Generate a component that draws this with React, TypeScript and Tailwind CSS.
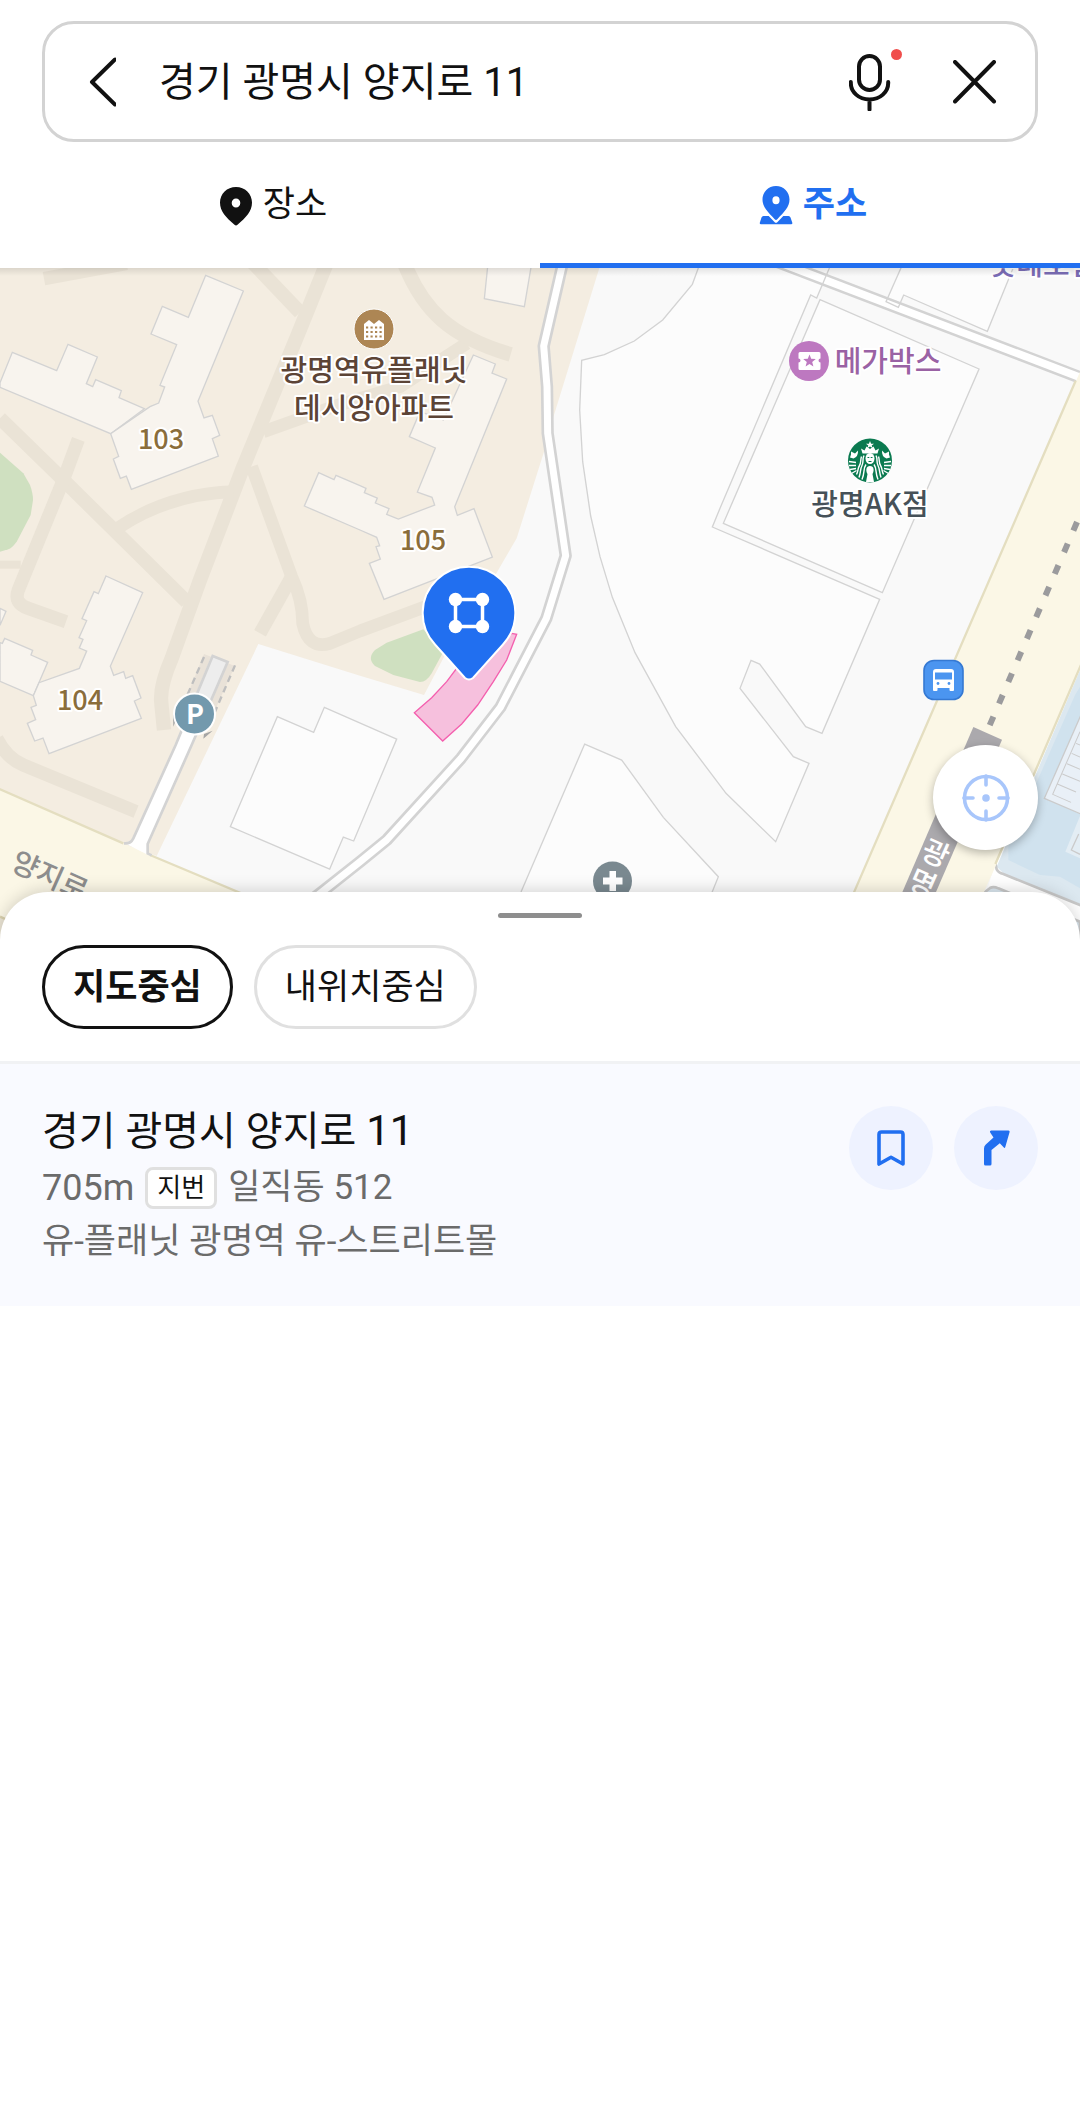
import { useState } from "react";
import clsx from "clsx";

const FILTERS = ["지도중심", "내위치중심"];

const RESULTS = [
  {
    title: "경기 광명시 양지로",
    no: "11",
    distance: "705m",
    lot: "일직동",
    lotNo: "512",
    building: "유-플래닛 광명역 유-스트리트몰",
  },
];

export default function App() {
  const [tab, setTab] = useState("address");
  const [filter, setFilter] = useState(FILTERS[0]);

  return (
    <div className="min-h-screen flex flex-col bg-white text-[#111111] font-[Roboto,'Noto_Sans_CJK_KR',sans-serif]">
      <header className="bg-white">
        <SearchBar />
        <nav className="grid grid-cols-2">
          <TabButton label="장소" active={tab === "place"} onClick={() => setTab("place")}>
            <PlaceIcon />
          </TabButton>
          <TabButton label="주소" active={tab === "address"} onClick={() => setTab("address")}>
            <AddressIcon />
          </TabButton>
        </nav>
      </header>

      {/* Map */}
      <section className="relative h-[672px] overflow-hidden bg-[#f9f9f9]">
        <MapView />
        <div className="absolute inset-x-0 top-0 h-2 bg-linear-to-b from-black/10 to-transparent" />
        <button
          aria-label="현재 위치"
          className="absolute right-[42px] bottom-[90px] w-[105px] h-[105px] rounded-full bg-white shadow-[0_3px_10px_rgba(0,0,0,0.28)] flex items-center justify-center"
        >
          <svg width="48" height="48" viewBox="0 0 48 48" fill="none" stroke="#a8c6fb" strokeWidth="3.600">
            <circle cx="24" cy="24" r="21.500" />
            <path d="M24 2v9M24 46v-9M2 24h9M46 24h-9" strokeLinecap="round" />
            <circle cx="24" cy="24" r="3.800" fill="#a8c6fb" stroke="none" />
          </svg>
        </button>
      </section>

      {/* Bottom sheet */}
      <main className="relative -mt-12 flex-1 rounded-t-[48px] bg-white shadow-[0_-2px_16px_rgba(0,0,0,0.16)]">
        <div className="pt-[21px] flex justify-center">
          <span className="w-[84px] h-[5px] rounded-full bg-[#8e8e8e]" />
        </div>

        <div className="mt-[27px] px-[42px] pb-8 flex gap-[21px] border-b-3 border-[#f1f2f4]">
          {FILTERS.map((name) => (
            <button
              key={name}
              onClick={() => setFilter(name)}
              className={clsx(
                "h-[84px] px-7 rounded-full border-3 text-[35px] leading-none",
                filter === name ? "border-[#111111] font-bold" : "border-[#e0e0e0]"
              )}
            >
              {name}
            </button>
          ))}
        </div>

        {RESULTS.map((item) => (
          <article key={item.no} className="px-[42px] pb-[37px] flex items-start bg-[#f9faff]">
            <div className="flex-1 pt-[38px] text-[35px] text-[#6b6b6b]">
              <h2 className="text-[40px] leading-[58px] text-[#111111]">
                {item.title} <span className="text-[42px]">{item.no}</span>
              </h2>
              <div className="h-[54px] flex items-center">
                <span className="text-[36px]">{item.distance}</span>
                <span className="mx-[11px] h-[42px] px-[9px] flex items-center rounded-lg border-3 border-[#e0e0e0] bg-white text-[26px] text-[#111111]">
                  지번
                </span>
                <span>
                  {item.lot} {item.lotNo}
                </span>
              </div>
              <p className="leading-[54px]">{item.building}</p>
            </div>
            <div className="pt-[42px] flex gap-[21px]">
              <button aria-label="저장" className="w-[84px] h-[84px] rounded-full bg-[#eef2ff] flex items-center justify-center">
                <svg width="28" height="36" viewBox="0 0 28 36" fill="none" stroke="#216ff0" strokeWidth="3.600" strokeLinejoin="round">
                  <path d="M2 4.500Q2 2 4.500 2h19Q26 2 26 4.500V34l-12-6.800L2 34Z" />
                </svg>
              </button>
              <button aria-label="길찾기" className="w-[84px] h-[84px] rounded-full bg-[#eef2ff] flex items-center justify-center">
                <svg width="28" height="36" viewBox="0 0 28 36" fill="#216ff0">
                  <path d="M9 .5H26.500Q28 .5 27.600 2L23.300 17Q22.700 18.600 21.600 17.300L17.800 13.200L9.500 20V34Q9.500 35.500 8 35.500H3.500Q2 35.500 2 34V18.500Q2 16.300 3.800 14.600L11.500 7.500L8.200 2.500Q7.300 .8 9 .5Z" />
                </svg>
              </button>
            </div>
          </article>
        ))}
      </main>
    </div>
  );
}

function SearchBar() {
  const [query, setQuery] = useState("경기 광명시 양지로 11");

  return (
    <div className="px-[42px] pt-[21px]">
      <div className="h-[121px] pr-2 flex items-stretch rounded-[32px] border-3 border-[#d3d3d3]">
        <button aria-label="뒤로" className="w-[114px] flex items-center justify-center">
          <svg width="28" height="50" viewBox="0 0 28 50" fill="none" stroke="#111" strokeWidth="4" strokeLinecap="round" strokeLinejoin="round">
            <path d="M27 2.500L4 25l23 22.500" />
          </svg>
        </button>
        <input
          aria-label="검색어"
          value={query}
          onChange={(e) => setQuery(e.target.value)}
          className="flex-1 min-w-0 pt-[2px] bg-transparent text-[40px] outline-none"
        />
        <button aria-label="음성 검색" className="w-[105px] relative flex items-center justify-center">
          <svg width="42" height="58" viewBox="0 0 42 58" fill="none" stroke="#111" strokeWidth="4" strokeLinecap="round">
            <rect x="10" y="3" width="21" height="34" rx="10.500" />
            <path d="M1.800 29v1C1.800 39 9.800 46.500 20.500 46.500s18.700-7.500 18.700-16.500v-1M20.500 46.500v10" />
          </svg>
          <span className="absolute left-[74px] top-[25px] w-[11px] h-[11px] rounded-full bg-[#f04e4c]" />
        </button>
        <button aria-label="지우기" className="w-[105px] flex items-center justify-center">
          <svg width="44" height="44" viewBox="0 0 44 44" fill="none" stroke="#111" strokeWidth="4" strokeLinecap="round">
            <path d="M2 2l39 39.500M41 2l-39 39.500" />
          </svg>
        </button>
      </div>
    </div>
  );
}

type TabProps = {
  label: string;
  active: boolean;
  onClick: () => void;
  children: React.ReactNode;
};

function TabButton({ label, active, onClick, children }: TabProps) {
  return (
    <button
      onClick={onClick}
      className={clsx(
        "h-[126px] pt-[6px] pl-[6px] flex items-center justify-center gap-[10px] border-b-5 text-[35px]",
        active ? "border-[#216ff0] text-[#216ff0] font-bold" : "border-transparent"
      )}
    >
      {children}
      {label}
    </button>
  );
}

function PlaceIcon() {
  return (
    <svg width="34" height="40" viewBox="0 0 34 40" fill="currentColor" fillRule="evenodd">
      <path d="M17 1C8 1 1 7.800 1 16.600 1 25.500 7 31.500 15.500 38.800q1.500 1.300 3 0C27 31.500 33 25.500 33 16.600 33 7.800 26 1 17 1Zm0 11.500a4.300 4.500 0 1 1 0 9 4.300 4.500 0 1 1 0-9Z" />
    </svg>
  );
}

function AddressIcon() {
  return (
    <svg width="34" height="40" viewBox="0 0 34 40" fill="currentColor" fillRule="evenodd">
      <path d="M17 0C9.300 0 3.500 6 3.500 13.500c0 7.500 5.500 12.500 12.200 19.700q1.300 1.400 2.600 0C25 26 30.500 21 30.500 13.500 30.500 6 24.700 0 17 0Zm0 10.200a3.600 4 0 1 1 0 8 3.600 4 0 1 1 0-8Z" />
      <path d="M4.500 30h5.200l6 6.200q1.300 1.200 2.600 0l6-6.200h5.200q1.500 0 2 1.500l1.800 5.200q.4 1.600-1.200 1.600H2q-1.600 0-1.200-1.600l1.700-5.200q.5-1.500 2-1.500Z" />
    </svg>
  );
}

/* ---------- Map ---------- */

const PATHS = [
  { d: "M132 836L380 790", w: 40 },
  { d: "M755 785L900 937", w: 42 },
  { d: "M982 785L895 1000L730 1400L600 1740L515 1975Q478 2060 484 2110L492 2190", w: 43 },
  { d: "M0 1255L190 1440L560 1805", w: 42 },
  { d: "M235 1318L190 1440L55 1770Q40 1810 85 1825L198 1865", w: 40 },
  { d: "M355 1583C450 1520 560 1480 700 1475", w: 38 },
  { d: "M755 1400L875 1730Q908 1800 908 1870Q925 1950 990 1930L1080 1893L1290 1815", w: 38 },
  { d: "M875 1730L780 1900", w: 40 },
  { d: "M790 1295L1000 1220L1200 1160L1400 1030", w: 38 },
  { d: "M1215 795C1270 930 1350 1010 1532 1063", w: 44 },
  { d: "M0 1694H62", w: 24 },
  { d: "M-10 2215Q20 2275 70 2295L408 2435", w: 40 },
];

const OUTLINE = "M2100 790L2077 853 1988 960 1903 1023 1813 1064 1745 1081 1739 1230 1748 1385 1772 1548 1800 1670 1837 1792 1905 1958 2027 2180 2160 2356 2178 2380 2327 2525 2427 2290 2380 2270 2220 2065 2253 1981 2279 1992 2417 2180 2466 2200 2639 1798 2137 1581 2160 1525 2432 885 2450 894 2494 790Z";

const WINDING = "M1688 790L1631 1038 1641 1160 1643 1300 1697 1667 1639 1855 1501 2122 1383 2275 1160 2520 1080 2585 940 2696";

// Ground, roads and buildings, drawn on a grid three times finer than the page
function Terrain() {
  return (
    <g transform="scale(0.33334)">
      <rect y="780" width="3240" height="2100" fill="#f9f9f9" />
      <path d="M0 780H1805L1798 804 1662 1245 1632 1355 1550 1615 1490 1718 1330 1975 1272 2085 1080 2027 775 1932 470 2568 0 2400Z" fill="#f4ede1" />
      <g fill="none" stroke="#eae3d6" strokeLinejoin="round">
        {PATHS.map((p) => (
          <path key={p.d} d={p.d} strokeWidth={p.w} />
        ))}
      </g>

      <g fill="#cfe0c0">
        <path d="M0 1358L70 1420 90 1455Q99 1480 99 1500L92 1545 50 1625Q35 1645 25 1648L0 1655Z" />
        <path d="M1270 1888L1160 1928 1125 1950Q1100 1975 1125 1998L1180 2025 1260 2046Q1280 2046 1295 2020L1330 1955Z" />
      </g>

      {/* Right block */}
      <path d={OUTLINE} fill="#fcfcfc" />
      <path d="M2703 804L2658 905 2695 922 2711 885 2962 994 3045 790H2709Z" fill="#fcfcfc" />
      <path d="M2235 748L3260 1140" stroke="#d3d3d3" strokeWidth="38" />
      <path d="M2235 748L3260 1140" stroke="#fff" strokeWidth="23" />
      <g fill="none" stroke="#d3d3d3" strokeWidth="4">
        <path d={OUTLINE} />
        <path d="M2460 899L2937 1107 2647 1778 2170 1570Z" fill="#fcfcfc" />
        <path d="M2709 790L2658 905 2695 922 2711 885 2962 994 3045 790" />
        <path d="M1563 2676L1754 2232 1865 2280 1990 2452 2155 2630 2135 2680" fill="#fcfcfc" />
      </g>

      {/* Apartment buildings */}
      <g fill="#f8f4ee" stroke="#d3d3d3" strokeWidth="4">
        <g transform="translate(0 780)">
          <path d="M0 368L37 277 170 332 204 253 292 291 259 371 278 380 287 359 364 392 357 413 433 446 332 521 0 382Z" />
          <path d="M617 46L730 93 594 424 612 474 637 466 659 526 637 536 655 588 394 688 379 648 361 655 340 597 356 589 332 521 450 440 476 429 494 381 480 376 530 254 453 222 487 139 565 172Z" />
        </g>
        <g transform="translate(1080 780)">
          <path d="M340 285L406 312 396 339 440 357 284 740 292 766 342 746 397 891 72 1018 28 910 61 897 48 860 59 857 50 832 0 810 -167 738 -124 638 -78 659 -72 646 0 677 18 685 13 698 52 714 46 729 87 746 80 763 115 777 224 735 216 712 172 696 226 564 148 530 180 455 250 480Z" />
          <path d="M384 10L373 116 493 140 515 10Z" />
        </g>
        <g transform="translate(0 1740)">
          <path d="M0 188L7 190 14 175 98 211 93 225 143 247 100 347 0 304Z" />
          <path d="M0 85L18 94 0 136Z" />
          <path d="M318 -12L428 38 331 259 341 286 371 275 377 295 398 287 423 354 403 363 424 415 147 521 129 474 104 483 82 430 107 419 93 382 109 376 100 347 117 308 238 265 260 213 238 204 249 178 237 173 260 122 246 116 282 35 295 41Z" />
          <path d="M832 410L941 457 973 382 1190 477 1061 783 1030 771 989 867 691 740Z" fill="#fcfcfc" />
        </g>
      </g>

      {/* Left avenue and the lane that leads to it */}
      <path d="M0 2367L370 2530 450 2565 715 2676 900 2754V2880H0Z" fill="#fbf7e6" />
      <path d="M-6 2365L370 2530M450 2565L900 2754" stroke="#e4dec0" strokeWidth="7" />
      <path d="M0 2750L80 2786V2880H0Z" fill="#ebe5d5" />
      <path d="M0 2750L80 2786" stroke="#d9d0ae" strokeWidth="7" />
      <path d="M612 1962L705 1998 645 2130 560 2090Z" fill="#e9e2d8" />
      <path d="M635 1967L685 1986 575 2235 443 2530V2564L375 2530 395 2520 525 2235Z" fill="#fff" />
      <path d="M640 1967L682 1985 630 2105 590 2088Z" fill="#ededed" />
      <path d="M372 2530Q392 2532 400 2515L527 2235 638 1968 683 1986 575 2235 443 2532V2560L455 2566" fill="none" stroke="#d3d3d3" strokeWidth="8" />
      <path d="M612 1971L562 2085M705 1996L645 2135" stroke="#bfbfbf" strokeWidth="7" strokeDasharray="20 14" />
      <path d="M519 2140L530 2155 520 2180ZM638 2192L612 2202 610 2216Z" fill="#a5a5a5" />

      {/* Winding road */}
      <g fill="none" strokeLinejoin="round">
        <path d={WINDING} stroke="#d3d3d3" strokeWidth="37" />
        <path d={WINDING} stroke="#fff" strokeWidth="21" />
      </g>

      {/* Station side */}
      <path d="M3240 2000L2986 2590 2955 2690 3240 2800Z" fill="#fff" />
      <path d="M3240 2010L2990 2600 3010 2620 3240 2715Z" fill="#dce8f0" />
      <path d="M3225 2085L3025 2540 3025 2580 3120 2625 3180 2630 3240 2665V2060Z" fill="#d0e2ee" />
      <path d="M2986 2590L2990 2608Q2995 2618 3010 2622L3250 2719" fill="none" stroke="#c9c9c9" strokeWidth="8" />
      <path d="M2950 2680L2970 2664Q2980 2658 2995 2665L3240 2765V2880H3000Z" fill="#dce8f0" stroke="#c9c9c9" strokeWidth="8" />
      <g transform="translate(2160 1740)" stroke="#cbcbcb" strokeWidth="4" fill="none">
        <path d="M1085 400L973 655 1085 703" fill="#e9f0f7" />
        <path d="M1080 455L998 643 1053 667M1012 612L1068 636M1027 582L1080 604M1041 551L1080 568M1055 520L1080 531M1068 490L1080 495" strokeWidth="3" />
        <path d="M1080 708L1036 815 1080 835Z" fill="#e3edf4" stroke="none" />
        <path d="M1076 762L1054 810 1080 823" />
      </g>

      {/* Main road */}
      <path d="M3250 1092L2563 2676H2700L2950 2680 2986 2600 3250 1985Z" fill="#fbf7e6" />
      <path d="M3227 1142L2545 2716M3250 1978L2986 2592" fill="none" stroke="#e4dec0" strokeWidth="7" />
      <path d="M3231 1566L2965 2185" stroke="#9b9b9d" strokeWidth="18" strokeDasharray="28 42.600" />
      <path d="M2920 2181L3006 2219 2808 2676 2790 2716H2690Z" fill="#aba9ad" />

      {/* Selected lot */}
      <path d="M1550 1903L1520 1980 1480 2045 1433 2115 1385 2172 1328 2223 1243 2138 1295 2093 1340 2045 1370 2005 1480 1940 1535 1900Z" fill="#f6c0dd" stroke="#f45fae" strokeWidth="4" />
    </g>
  );
}

function MapView() {
  return (
    <svg viewBox="0 268 1080 672" preserveAspectRatio="xMidYMin slice" className="block w-full h-full font-['Noto_Sans_CJK_KR',sans-serif]">
      <Terrain />

      <Label x={161} y={449} size={27} fill="#8a6d3b">103</Label>
      <Label x={423} y={550} size={27} fill="#8a6d3b">105</Label>
      <Label x={80} y={710} size={27} fill="#8a6d3b">104</Label>
      <Label x={374} y={381} fill="#5c4436">광명역유플래닛</Label>
      <Label x={374} y={419} fill="#5c4436">데시앙아파트</Label>
      <Label x={888} y={372} fill="#9a62a4">메가박스</Label>
      <Label x={870} y={515} fill="#465158">광명AK점</Label>
      <Label x={1043} y={275} fill="#7a6cb5">롯데호텔</Label>

      <g fontSize="29" fontWeight="500" textAnchor="middle">
        <g transform="rotate(24 52 874)">
          <text x="51" y="887" fill="#8d8d8d">양지로</text>
        </g>
        <g fill="#fff">
          <text x="936" y="864" transform="rotate(24 936 853)">광</text>
          <text x="923" y="894" transform="rotate(24 923 883)">명</text>
        </g>
      </g>

      {/* Apartment */}
      <circle cx="374" cy="329" r="20" fill="#ad8654" stroke="#fff" strokeWidth="1" />
      <path d="M364 340v-16l5-4 5 4 5-4 5 4v16Z" fill="#fff" />
      <path d="M366 327.500h16M366 332h16M366 336.500h16" stroke="#ad8654" strokeWidth="2" strokeDasharray="2.200 2.300" />

      {/* Cinema */}
      <circle cx="809" cy="361" r="20" fill="#bd78c0" />
      <path d="M800 352h19q1.500 0 1.500 1.500v5a2 2 0 0 0 0 4v6q0 1.500-1.500 1.500h-19q-1.500 0-1.500-1.500v-6a2 2 0 0 0 0-4v-5q0-1.500 1.500-1.500Z" fill="#fff" />
      <path d="M809.500 354.500l1.700 4.300 4.600.3-3.600 2.900 1.200 4.500-3.900-2.500-3.900 2.500 1.200-4.500-3.600-2.900 4.600-.3Z" fill="#bd78c0" />

      <Starbucks />

      {/* Parking */}
      <circle cx="194.500" cy="714" r="20.500" fill="#7399ad" stroke="#fff" strokeWidth="2" />
      <text x="195" y="724" fontSize="27" fontWeight="700" textAnchor="middle" fill="#fff">P</text>

      {/* Hospital */}
      <circle cx="612.500" cy="881" r="19.500" fill="#7a8990" />
      <path d="M609.500 871h6.500v6.500h6.500v7h-6.500v6.500h-6.500v-6.500h-6.500v-7h6.500Z" fill="#fff" />

      {/* Bus stop */}
      <rect x="924" y="660.500" width="39" height="39" rx="10" fill="#4b95f0" stroke="#3579d3" strokeWidth="1.600" />
      <path d="M936 669h15q3 0 3 3v18q0 1-1 1h-2.500q-1 0-1-1v-2h-12v2q0 1-1 1H934q-1 0-1-1v-18q0-3 3-3Z" fill="#fff" />
      <rect x="935" y="672.500" width="17" height="7" fill="#4b95f0" />
      <circle cx="938" cy="683.500" r="1.400" fill="#4b95f0" />
      <circle cx="949" cy="683.500" r="1.400" fill="#4b95f0" />

      {/* Selected address pin */}
      <g transform="translate(469 613)">
        <path d="M-4 65L-34 31.500A46.300 46.300 0 1 1 34 31.500L4 65Q0 68 -4 65Z" fill="#216ff0" stroke="#fff" strokeWidth="2" />
        <rect x="-13.500" y="-13.500" width="27" height="27" fill="none" stroke="#fff" strokeWidth="3.500" />
        <g fill="#fff">
          <circle cx="-13.500" cy="-13.500" r="6.700" />
          <circle cx="13.500" cy="-13.500" r="6.700" />
          <circle cx="-13.500" cy="13.500" r="6.700" />
          <circle cx="13.500" cy="13.500" r="6.700" />
        </g>
      </g>
    </svg>
  );
}

type LabelProps = { x: number; y: number; fill: string; size?: number; children: React.ReactNode };

function Label({ x, y, fill, size = 29, children }: LabelProps) {
  return (
    <text x={x} y={y} fontSize={size} fontWeight="500" textAnchor="middle" fill={fill} stroke="#fff" strokeWidth="4" strokeLinejoin="round" paintOrder="stroke">
      {children}
    </text>
  );
}

function Starbucks() {
  return (
    <g transform="translate(870 460.500)" fill="none" stroke="#fff">
      <circle r="22" fill="#0b7a50" stroke="none" />
      {/* crown */}
      <path d="M-9-12l3.500 2 2-4 3.500 2.500 3.500-2.500 2 4 3.500-2-1.500 5H-7.500Z" fill="#fff" stroke="none" />
      <path d="M0-19.500l1.100 2.700h2.900l-2.300 1.700.9 2.700-2.600-1.600-2.600 1.600.9-2.700-2.300-1.700h2.900Z" fill="#fff" stroke="none" />
      {/* face and body */}
      <ellipse cy="-2" rx="4.500" ry="5.500" fill="#fff" stroke="none" />
      <path d="M-2.500-3h1.800M.7-3h1.800M-1.500 1h3" stroke="#0b7a50" strokeWidth="1" />
      <path d="M0 5.500c-4 0-4.500 4.500-2.500 8L-4 21.500h8L2.500 13.500c2-3.500 1.500-8-2.500-8Z" fill="#fff" stroke="none" />
      {/* hair */}
      <path d="M-6-5c-2 4 0 6-2 10s-1 6-3 12M-4 4c-3 4-1 8-4 15M6-5c2 4 0 6 2 10s1 6 3 12M4 4c3 4 1 8 4 15M-8.500-4c-1.500 4 0 6-2 9s-1 5-3 9M8.500-4c1.500 4 0 6 2 9s1 5 3 9" strokeWidth="1.400" />
      {/* tails */}
      <path d="M-19-9l4 2 3-3q.5 6-4.500 8l-3.500-1 1-3ZM19-9l-4 2-3-3q-.5 6 4.500 8l3.500-1-1-3Z" fill="#fff" stroke="none" />
      <path d="M-21 1l7 1M-21 5l7 0M-20 9l6-1M-18.500 13l5-3M21 1l-7 1M21 5l-7 0M20 9l-6-1M18.500 13l-5-3" strokeWidth="1.300" />
    </g>
  );
}
